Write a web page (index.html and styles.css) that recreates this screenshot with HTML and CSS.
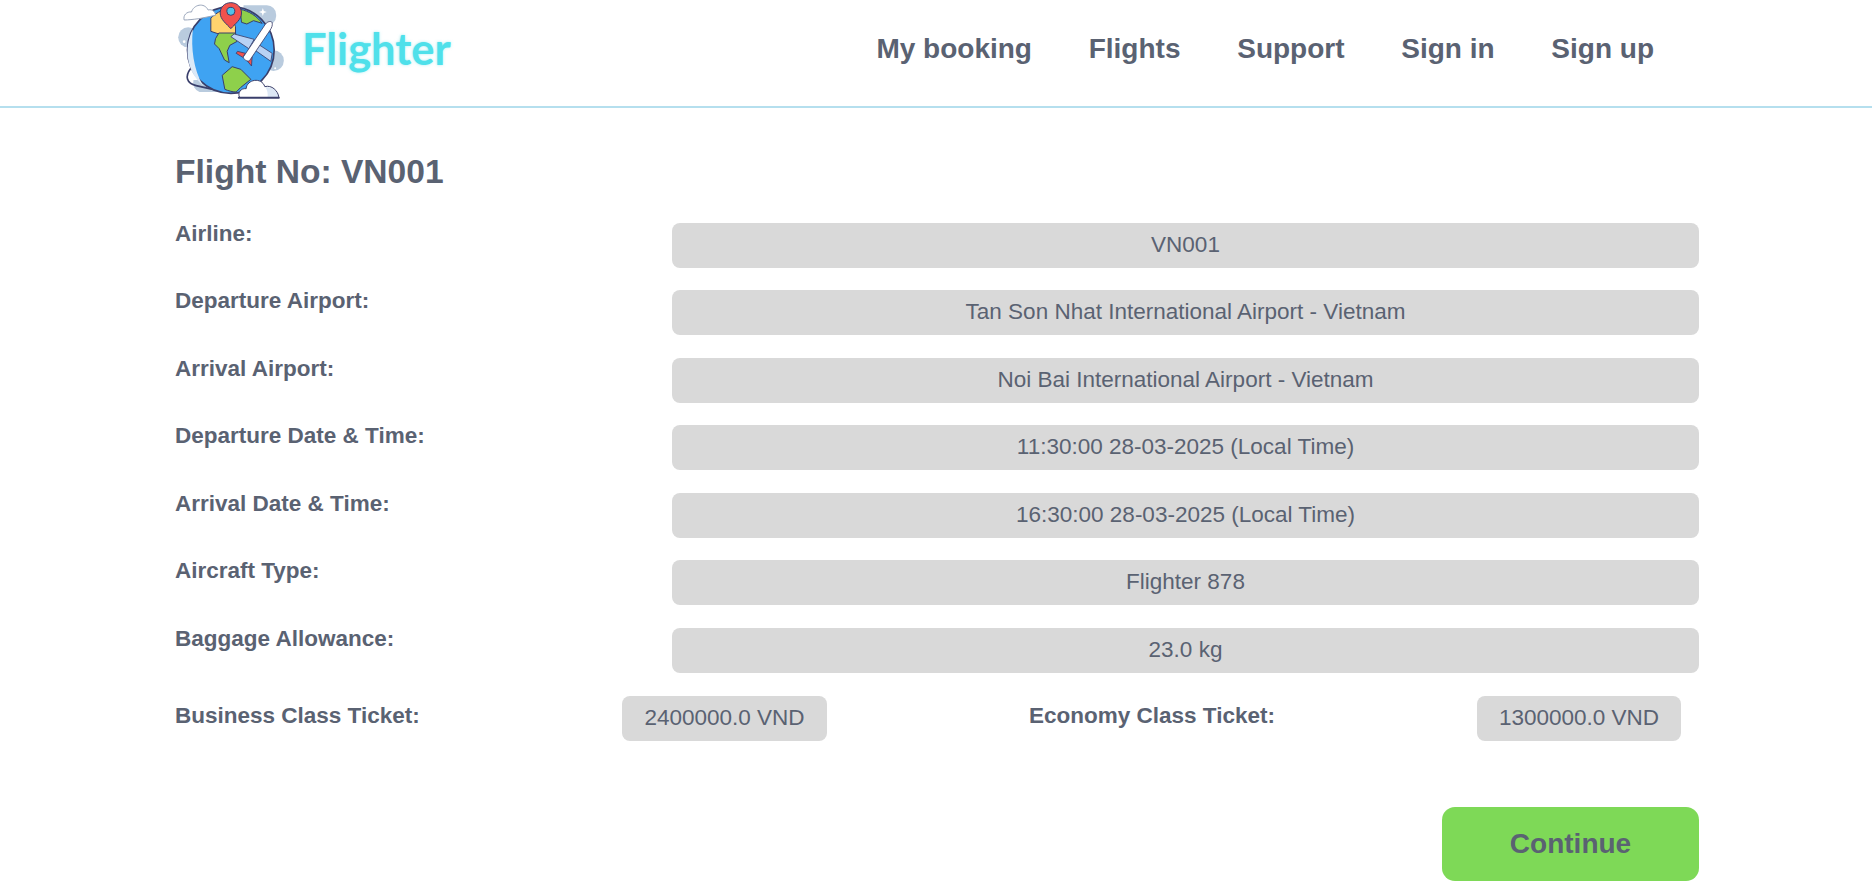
FILE: index.html
```html
<!DOCTYPE html>
<html lang="en">
<head>
<meta charset="utf-8">
<title>Flighter</title>
<link rel="stylesheet" href="styles.css">
</head>
<body>
<header class="topbar">
  <a class="brand" href="#">
    <svg class="brand-logo" viewBox="0 0 380 321" aria-hidden="true">
      <g fill="#b9cbde">
        <circle cx="84" cy="112" r="30"/>
        <circle cx="340" cy="182" r="31"/>
        <path d="M250 16h70a28 28 0 0 1 28 28v4a28 28 0 0 1-28 28h-70z"/>
        <path d="M100 240h80v36h-62a30 30 0 0 1-18-36z"/>
      </g>
      <g fill="#fff">
        <path d="M308 24l3 9 9 3-9 3-3 9-3-9-9-3 9-3z"/>
        <circle cx="72" cy="125" r="4"/>
        <circle cx="345" cy="205" r="3"/>
      </g>
      <path d="M92 205c-18 24-14 44 16 52 26 7 62 14 92 17" fill="none" stroke="#3a3f6b" stroke-width="5"/>
      <circle cx="212" cy="150" r="130" fill="#3fa3f2" stroke="#3a3f6b" stroke-width="5"/>
      <path d="M98 88c-30 60-16 130 30 168-28-48-36-112-30-168z" fill="#dbe9f7"/>
      <path d="M152 54c14-14 32-24 50-28l24 54v22h-50l-24-8z" fill="#ffd36e" stroke="#3a3f6b" stroke-width="3"/>
      <path d="M240 28c26 5 50 20 66 42l-26-8-20 10-16-5z" fill="#8ed04b" stroke="#3a3f6b" stroke-width="3"/>
      <path d="M166 116l10-17h50l5 25-22 12-8 18 6 34-14-8-16-34-14-14z" fill="#8ed04b" stroke="#3a3f6b" stroke-width="3"/>
      <path d="M186 226l30-26 26 8 30 30-30 24-14 14c-12 0-24-4-34-8z" fill="#8ed04b" stroke="#3a3f6b" stroke-width="3"/>
      <path d="M212 8c-20 0-32 15-32 31 0 20 20 33 32 47 12-14 32-27 32-47 0-16-12-31-32-31z" fill="#f0524d" stroke="#3a3f6b" stroke-width="3"/>
      <circle cx="212" cy="34" r="12" fill="#4fc3e8" stroke="#3a3f6b" stroke-width="3"/>
      <g stroke="#3a3f6b" stroke-width="2.5" stroke-linejoin="round">
        <path d="M282 118l-60-16-10 8 54 36z" fill="#b8d2f4"/>
        <path d="M290 130l46 30-4 24-54-38z" fill="#b8d2f4"/>
        <path d="M248 172l-20-12 4-6 24 6z" fill="#f0524d"/>
        <path d="M254 174l20 24 2-30z" fill="#f0524d"/>
        <path d="M250 170L316 72c6-8 18-10 20-4 2 8-2 16-6 22l-62 92c-6 4-20-4-18-12z" fill="#fff"/>
      </g>
      <path d="M72 60c-4-14 8-26 22-24 6-22 38-30 50-6 14-4 22 8 22 16l-50 10c-16 2-32 4-44 4z" fill="#fff" stroke="#9aa6bb" stroke-width="3"/>
      <path d="M238 292c-6-14 4-28 20-26 2-28 46-36 56-6 20-6 40 12 42 32z" fill="#fff"/>
      <path d="M316 262c20-4 38 12 40 30h-34c2-10 0-20-6-30z" fill="#dce7f5"/>
      <path d="M238 292c-6-14 4-28 20-26 2-28 46-36 56-6 20-6 40 12 42 32" fill="none" stroke="#3a3f6b" stroke-width="3"/>
      <path d="M236 293h120" stroke="#3a3f6b" stroke-width="6" stroke-linecap="round"/>
    </svg>
    <span class="brand-name">Flighter</span>
  </a>
  <nav class="nav">
    <a href="#">My booking</a>
    <a href="#">Flights</a>
    <a href="#">Support</a>
    <a href="#">Sign in</a>
    <a href="#">Sign up</a>
  </nav>
</header>
<main class="content">
  <h1 class="title">Flight No: VN001</h1>
  <div class="details">
    <div class="row"><span class="label">Airline:</span><span class="value">VN001</span></div>
    <div class="row"><span class="label">Departure Airport:</span><span class="value">Tan Son Nhat International Airport - Vietnam</span></div>
    <div class="row"><span class="label">Arrival Airport:</span><span class="value">Noi Bai International Airport - Vietnam</span></div>
    <div class="row"><span class="label">Departure Date &amp; Time:</span><span class="value">11:30:00 28-03-2025 (Local Time)</span></div>
    <div class="row"><span class="label">Arrival Date &amp; Time:</span><span class="value">16:30:00 28-03-2025 (Local Time)</span></div>
    <div class="row"><span class="label">Aircraft Type:</span><span class="value">Flighter 878</span></div>
    <div class="row"><span class="label">Baggage Allowance:</span><span class="value">23.0 kg</span></div>
  </div>
  <div class="prices">
    <span class="label">Business Class Ticket:</span>
    <span class="value">2400000.0 VND</span>
    <span class="label second">Economy Class Ticket:</span>
    <span class="value">1300000.0 VND</span>
  </div>
  <div class="actions">
    <button class="continue" type="button">Continue</button>
  </div>
</main>
</body>
</html>
```
FILE: styles.css
```css
* { box-sizing: border-box; }
html, body { margin: 0; height: 100%; overflow: hidden; }
body {
  background: #fff;
  color: #5a6272;
  font-family: "Liberation Sans", Arial, sans-serif;
}
.topbar {
  height: 108px;
  display: flex;
  align-items: flex-start;
  justify-content: space-between;
  padding: 0 218px 0 160px;
  border-bottom: 2px solid #b5dfee;
}
.brand {
  display: flex;
  align-items: flex-start;
  text-decoration: none;
}
.brand-logo { width: 127px; height: 107px; flex: none; }
.brand-name {
  margin: 22px 0 0 15px;
  font-family: "Lato", sans-serif;
  font-size: 43.5px;
  font-weight: 700;
  line-height: 52px;
  color: #4fe0ea;
  text-shadow: 0 0 3px rgba(79, 224, 234, 0.5);
}
.nav {
  display: flex;
  gap: 56.75px;
  padding-top: 32px;
}
.nav a {
  color: #5a6272;
  font-size: 28px;
  font-weight: 700;
  line-height: 34px;
  text-decoration: none;
}
.content {
  width: 1524px;
  margin-left: 175px;
  padding-top: 45px;
}
.title {
  margin: 0 0 31.5px;
  font-size: 33.6px;
  font-weight: 700;
  line-height: 38px;
}
.details {
  display: flex;
  flex-direction: column;
  gap: 22.5px;
}
.row {
  display: grid;
  grid-template-columns: 497px 1027px;
  height: 45px;
}
.label {
  font-size: 22.5px;
  font-weight: 700;
  line-height: 21px;
}
.value {
  display: block;
  height: 45px;
  background: #d9d9d9;
  border-radius: 8px;
  font-size: 22.5px;
  line-height: 43px;
  text-align: center;
}
.prices {
  display: grid;
  grid-template-columns: 447px 205px 650px 204px;
  align-items: center;
  margin-top: 23px;
}
.prices .label { padding-bottom: 5px; }
.second { padding-left: 202px; }
.actions {
  display: flex;
  justify-content: flex-end;
  margin-top: 66.5px;
}
.continue {
  width: 257px;
  height: 74px;
  border: 0;
  border-radius: 13px;
  background: #7ed957;
  color: #5a6272;
  font-family: inherit;
  font-size: 28px;
  font-weight: 700;
}
```
